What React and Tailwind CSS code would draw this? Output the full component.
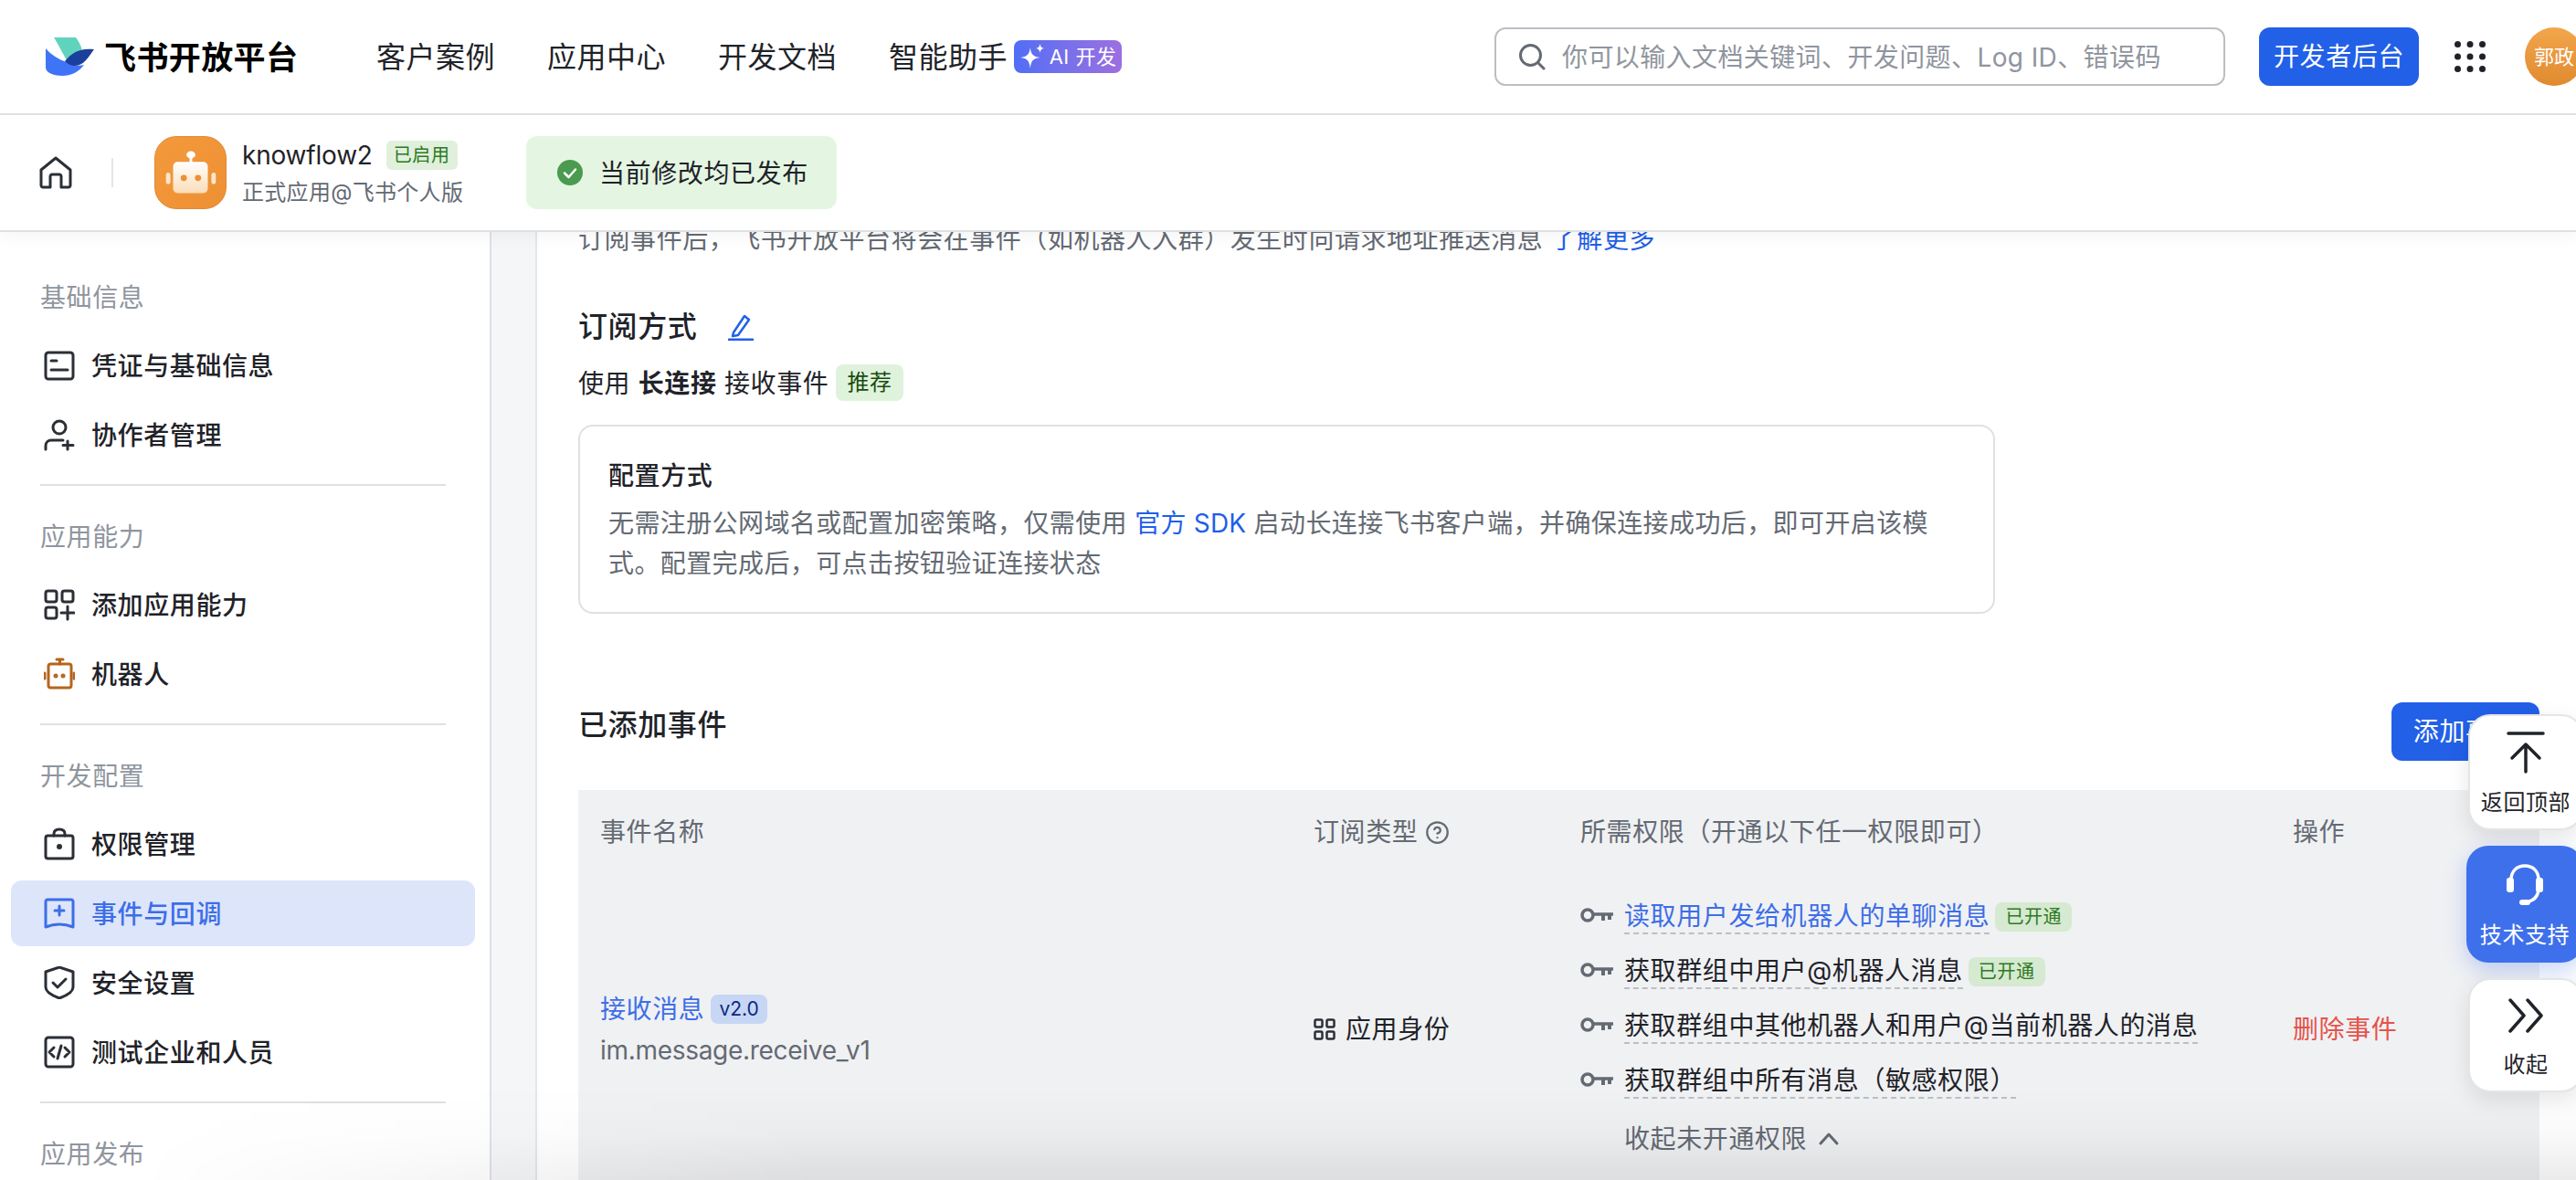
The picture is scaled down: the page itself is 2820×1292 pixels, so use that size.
import React from 'react';
import { CircleHelp } from 'lucide-react';

const Logo = () => (
  <svg width="54" height="42" viewBox="10 11 54 42" className="shrink-0">
    <path d="M19 11H43C46 15 49 20 50 26C44 27 38 31 33 36C28 27 24 19 19 11Z" fill="#5fd3bc" />
    <path d="M10 23C16 30 24 35 33 38C38 41 46 43 52 41C46 49 38 53 28 53C20 53 10 50 10 44Z" fill="#3f74f6" />
    <path d="M31 37C37 30 45 22 63 24C57 32 52 42 42 42C38 42 34 40 31 37Z" fill="#1b3f9c" />
  </svg>
);

const Spark = () => (
  <svg width="30" height="30" viewBox="0 0 28 28" className="shrink-0">
    <path d="M11 5C12 12 14 14 21 15C14 16 12 18 11 26C10 18 8 16 1 15C8 14 10 12 11 5Z" fill="#fff" />
    <path d="M21 1C21.5 4 22.5 5 25 5.5C22.5 6 21.5 7 21 10C20.5 7 19.5 6 17 5.5C19.5 5 20.5 4 21 1Z" fill="#fff" />
  </svg>
);

const BotIcon = () => (
  <div className="w-[79px] h-[80px] shrink-0 rounded-[24px] bg-gradient-to-br from-[#f39a3c] to-[#ee8f33] border border-[#e08a38]">
    <svg width="77" height="78" viewBox="0 0 79 80">
      <defs>
        <linearGradient id="botHead" x1="0" y1="0" x2="0" y2="1">
          <stop offset="0" stopColor="#fff" />
          <stop offset="1" stopColor="#fbdcb8" />
        </linearGradient>
      </defs>
      <ellipse cx="40" cy="20" rx="5" ry="4" fill="#fff" />
      <rect x="38.5" y="22" width="3" height="8" fill="#fff" />
      <rect x="20" y="28" width="39" height="35" rx="5" fill="url(#botHead)" />
      <rect x="12" y="40" width="5" height="13" rx="2.5" fill="#fde6cc" />
      <rect x="63" y="40" width="5" height="13" rx="2.5" fill="#fde6cc" />
      <circle cx="32" cy="46" r="3.5" fill="#ee8f33" />
      <circle cx="48" cy="46" r="3.5" fill="#ee8f33" />
    </svg>
  </div>
);

const SideIcon = ({ children, color = '#2b2f36' }) => (
  <svg width="34" height="36" viewBox="0 0 34 36" fill="none" stroke={color} strokeWidth="3" strokeLinecap="round" strokeLinejoin="round" className="shrink-0">
    {children}
  </svg>
);

const icons = {
  cred: (
    <SideIcon>
      <rect x="2" y="4" width="30" height="29" rx="3" />
      <path d="M8 13H14M8 23H26" />
    </SideIcon>
  ),
  user: (
    <SideIcon>
      <circle cx="17" cy="10" r="7" />
      <path d="M2 34V30C2 26 5 24 8 24H21M26 25V34M21 29.5H32" />
    </SideIcon>
  ),
  add: (
    <SideIcon>
      <rect x="2" y="3" width="12" height="12" rx="2.5" />
      <rect x="20" y="3" width="12" height="12" rx="2.5" />
      <rect x="2" y="21" width="12" height="12" rx="2.5" />
      <path d="M26 20V34M19 27H33" />
    </SideIcon>
  ),
  bot: (
    <SideIcon color="#b5651d">
      <rect x="5" y="7" width="25" height="26" rx="2.5" />
      <path d="M14 2H21M17.500 2V7M1 17V23M33 17V23" />
      <circle cx="13" cy="20" r="1" fill="#b5651d" />
      <circle cx="21" cy="20" r="1" fill="#b5651d" />
    </SideIcon>
  ),
  perm: (
    <SideIcon>
      <rect x="2" y="9" width="30" height="25" rx="2.500" />
      <path d="M11 9V7C11 3 14 2 17 2C20 2 23 3 23 7V9" />
      <circle cx="17" cy="21" r="1.500" fill="#2b2f36" />
    </SideIcon>
  ),
  event: (
    <SideIcon color="#3d6ee8">
      <path d="M2 5C2 4 3 3 4 3H30C31 3 32 4 32 5V33C27 31 22 30 17 30C12 30 7 31 2 33Z" />
      <path d="M17 10V20M12 15H22" />
    </SideIcon>
  ),
  shield: (
    <SideIcon>
      <path d="M17 1L32 6V23C32 28 25 32 17 35C9 32 2 28 2 23V6Z" />
      <path d="M10 18L15 23L24 14" />
    </SideIcon>
  ),
  code: (
    <SideIcon>
      <rect x="2" y="2" width="30" height="32" rx="3" />
      <path d="M11 13L6 18L11 23M23 13L28 18L23 23M19 11L15 25" />
    </SideIcon>
  ),
};

const menu = [
  { title: '基础信息', items: [['cred', '凭证与基础信息'], ['user', '协作者管理']] },
  { title: '应用能力', items: [['add', '添加应用能力'], ['bot', '机器人']] },
  { title: '开发配置', items: [['perm', '权限管理'], ['event', '事件与回调'], ['shield', '安全设置'], ['code', '测试企业和人员']] },
];

const perms = [
  { text: '读取用户发给机器人的单聊消息', on: true, link: true },
  { text: '获取群组中用户@机器人消息', on: true },
  { text: '获取群组中其他机器人和用户@当前机器人的消息' },
  { text: '获取群组中所有消息（敏感权限）' },
];

const Key = () => (
  <svg width="36" height="20" viewBox="0 0 36 20" fill="none" stroke="#646a73" strokeWidth="3.500" className="shrink-0 -mt-[5px]">
    <circle cx="8" cy="10" r="6" />
    <path d="M14 9H36" />
    <path d="M25 9V16M32 9V15" strokeWidth="4" />
  </svg>
);

const Sidebar = () => (
  <aside className="w-[538px] shrink-0 bg-white border-r-2 border-[#dee0e3] pt-12">
    {menu.map((group) => (
      <div key={group.title}>
        <div className="h-[44px] mb-[18px] pl-[44px] pt-[2px] text-[28px] leading-[44px] text-[#8f959e]">{group.title}</div>
        <div className="flex flex-col gap-1">
          {group.items.map(([icon, label]) => {
            const active = icon === 'event';
            return (
              <div
                key={label}
                className={
                  active
                    ? 'ml-3 w-[508px] h-[72px] pl-9 flex items-center gap-[18px] rounded-[12px] bg-[#dde5fa] text-[28px] font-medium text-[#3d6ee8]'
                    : 'ml-3 w-[508px] h-[72px] pl-9 flex items-center gap-[18px] rounded-[12px] text-[28px] font-medium text-[#1f2329]'
                }
              >
                {icons[icon]}
                <span className="pt-[2px]">{label}</span>
              </div>
            );
          })}
        </div>
        <div className="h-[2px] mt-[18px] mb-8 ml-[44px] w-[444px] bg-[#dee0e3]" />
      </div>
    ))}
    <div className="h-[44px] pl-[44px] pt-[2px] text-[28px] leading-[44px] text-[#8f959e]">应用发布</div>
  </aside>
);

const EventTable = () => (
  <div className="mt-8 bg-[#f0f1f3] text-[28px]">
    <div className="h-[92px] flex items-center text-[#646a73]">
      <div className="w-[805px] pl-6">事件名称</div>
      <div className="w-[292px] flex items-center gap-[8px]">
        订阅类型
        <CircleHelp size={27} strokeWidth={2} />
      </div>
      <div className="w-[780px]">所需权限（开通以下任一权限即可）</div>
      <div>操作</div>
    </div>
    <div className="h-[340px] flex items-center">
      <div className="w-[805px] pl-6">
        <div className="flex items-center gap-[7px] h-[44px] pt-[2px]">
          <span className="text-[#3d6ee8]">接收消息</span>
          <span className="h-[32px] px-[9px] rounded-[8px] bg-[#c7d6f5] text-[#0a2a80] text-[21px] leading-[32px] tracking-normal">v2.0</span>
        </div>
        <div className="mt-[2px] leading-[44px] text-[#646a73] tracking-[-0.3px]">im.message.receive_v1</div>
      </div>
      <div className="w-[292px] flex items-center gap-[11px] text-[#1f2329]">
        <svg width="24" height="24" viewBox="0 0 24 24" fill="none" stroke="#2b2f36" strokeWidth="2.500" className="shrink-0">
          <rect x="1.500" y="1.500" width="8" height="8" rx="1.500" />
          <rect x="14.500" y="1.500" width="8" height="8" rx="1.500" />
          <rect x="1.500" y="14.500" width="8" height="8" rx="1.500" />
          <rect x="14.500" y="14.500" width="8" height="8" rx="1.500" />
        </svg>
        应用身份
      </div>
      <div className="w-[780px] h-[306px] flex flex-col">
        {perms.map((p) => (
          <div key={p.text} className="h-[60px] flex items-center">
            <Key />
            <span
              className={
                p.link
                  ? 'ml-[12px] h-[38px] leading-[36px] border-b-2 border-dashed border-[#bbbfc4] text-[#3d6ee8]'
                  : 'ml-[12px] h-[38px] leading-[36px] border-b-2 border-dashed border-[#bbbfc4] text-[#1f2329]'
              }
            >
              {p.text}
            </span>
            {p.on && (
              <span className="ml-[6px] -mt-[1px] h-[32px] px-[11px] rounded-[8px] bg-[#d6e9d1] text-[#2c7a1f] text-[20px] leading-[32px]">已开通</span>
            )}
          </div>
        ))}
        <div className="mt-[3px] h-[60px] pl-[48px] flex items-center gap-[12px] text-[#646a73]">
          收起未开通权限
          <svg width="24" height="16" viewBox="0 0 24 16" fill="none" stroke="#646a73" strokeWidth="3" strokeLinecap="round" strokeLinejoin="round">
            <path d="M3 13L12 3L21 13" />
          </svg>
        </div>
      </div>
      <div className="text-[#e5534b]">删除事件</div>
    </div>
  </div>
);

const App = () => {
  return (
    <div className="relative w-[2820px] h-[1292px] overflow-hidden bg-white flex flex-col tracking-[0.6px] font-['Inter','Noto_Sans_CJK_SC',sans-serif]">
      <header className="relative z-20 h-[126px] shrink-0 bg-white border-b-2 border-[#dee0e3] pl-[50px] flex items-center">
        <Logo />
        <span className="ml-[10px] w-[298px] pt-[2px] text-[35px] font-bold text-black whitespace-nowrap tracking-[0.4px]">飞书开放平台</span>
        <nav className="flex items-center gap-[57px] pt-[2px] text-[32px] text-[#1f2329] whitespace-nowrap tracking-[0.5px]">
          <span>客户案例</span>
          <span>应用中心</span>
          <span>开发文档</span>
          <span className="flex items-center gap-[7px]">
            智能助手
            <span className="h-[36px] w-[118px] -mt-[2px] rounded-[8px] bg-gradient-to-r from-[#4f6ef5] to-[#9b6fe0] flex items-center justify-center gap-[3px] text-white text-[22px] leading-none">
              <Spark />
              AI 开发
            </span>
          </span>
        </nav>
        <div className="ml-auto -mr-[8px] flex items-center shrink-0">
          <div className="w-[800px] h-[64px] rounded-[12px] border-2 border-[#bbbfc4] flex items-center pl-[24px] gap-[18px]">
            <svg width="30" height="30" viewBox="0 0 30 30" fill="none" stroke="#646a73" strokeWidth="3" strokeLinecap="round" className="shrink-0">
              <circle cx="13.500" cy="13.500" r="11" />
              <path d="M22 22L28 28" />
            </svg>
            <span className="pt-[2px] text-[28px] text-[#8f959e] whitespace-nowrap tracking-[0.4px]">你可以输入文档关键词、开发问题、Log ID、错误码</span>
          </div>
          <button className="ml-[37px] w-[175px] h-[64px] rounded-[12px] bg-[#2260e8] text-white text-[28px]">开发者后台</button>
          <svg width="34" height="34" viewBox="0 0 34 34" fill="#1f2329" className="ml-[39px] shrink-0">
            <circle cx="3.500" cy="3.500" r="3.500" />
            <circle cx="17" cy="3.500" r="3.500" />
            <circle cx="30.500" cy="3.500" r="3.500" />
            <circle cx="3.500" cy="17" r="3.500" />
            <circle cx="17" cy="17" r="3.500" />
            <circle cx="30.500" cy="17" r="3.500" />
            <circle cx="3.500" cy="30.500" r="3.500" />
            <circle cx="17" cy="30.500" r="3.500" />
            <circle cx="30.500" cy="30.500" r="3.500" />
          </svg>
          <div className="ml-[43px] w-[64px] h-[64px] rounded-full bg-gradient-to-b from-[#f2a64c] to-[#e08a2f] flex items-center justify-center text-white text-[22px] whitespace-nowrap tracking-normal">郭政</div>
        </div>
      </header>

      <div className="relative z-10 h-[128px] shrink-0 bg-white border-b-2 border-[#dee0e3] shadow-[0_6px_16px_rgba(0,0,0,0.04)] pl-[43px] flex items-center">
        <svg width="36" height="36" viewBox="0 0 36 36" fill="none" stroke="#2b2f36" strokeWidth="3" strokeLinejoin="round" className="shrink-0">
          <path d="M2 15L18 2L34 15V32C34 33 33 34 32 34H24V22C24 21 23 20 22 20H14C13 20 12 21 12 22V34H4C3 34 2 33 2 32Z" />
        </svg>
        <div className="ml-[43px] w-[2px] h-[32px] bg-[#e4e5e7]" />
        <div className="ml-[45px]">
          <BotIcon />
        </div>
        <div className="ml-[17px] w-[311px]">
          <div className="flex items-center gap-[15px] h-[40px] pt-[2px]">
            <span className="text-[28px] text-[#1f2329] tracking-[-0.2px]">knowflow2</span>
            <span className="h-[32px] px-[8px] rounded-[6px] bg-[#e0f0dc] text-[#2c7a1f] text-[20px] leading-[32px]">已启用</span>
          </div>
          <div className="mt-[4px] h-[36px] text-[24px] leading-[36px] text-[#646a73] tracking-[0.3px]">正式应用@飞书个人版</div>
        </div>
        <div className="w-[340px] h-[80px] rounded-[12px] bg-[#e4f6e2] flex items-center pl-[34px] gap-[18px] text-[28px] text-[#1f2329]">
          <svg width="28" height="28" viewBox="0 0 28 28" className="shrink-0">
            <circle cx="14" cy="14" r="14" fill="#4a9b4f" />
            <path d="M8 14.500L12.500 19L20 10.500" fill="none" stroke="#fff" strokeWidth="2.500" strokeLinecap="round" strokeLinejoin="round" />
          </svg>
          <span className="pt-[2px]">当前修改均已发布</span>
        </div>
      </div>

      <div className="flex flex-1 min-h-0 overflow-hidden">
        <Sidebar />
        <div className="w-[50px] shrink-0 bg-[#f5f6f8] border-r-2 border-[#e4e5e7]" />
        <main className="flex-1 min-w-0 pl-[45px] pr-10 -mt-[14px] text-[#1f2329]">
          <p className="text-[28px] leading-[44px] text-[#646a73] whitespace-nowrap tracking-[0.55px]">
            订阅事件后，飞书开放平台将会在事件（如机器人入群）发生时向请求地址推送消息 <a className="text-[#1f5fe8]">了解更多</a>
          </p>
          <div className="mt-[52px] h-[44px] flex items-center gap-[34px]">
            <h2 className="text-[32px] font-medium">订阅方式</h2>
            <svg width="28" height="30" viewBox="0 0 28 30" fill="none" stroke="#2260e8" strokeWidth="2.500" strokeLinejoin="round" strokeLinecap="round">
              <path d="M6 21L18 3L23 7L11 24L5 25Z" />
              <path d="M1 29H27" strokeWidth="3" />
            </svg>
          </div>
          <div className="mt-[19px] h-[40px] flex items-center text-[28px]">
            <span className="pt-[2px]">
              使用&nbsp;<b className="font-semibold">长连接</b>&nbsp;接收事件
            </span>
            <span className="ml-[8px] h-[40px] px-[12px] rounded-[8px] bg-[#dff3dc] text-[#1b4a10] text-[24px] leading-[40px]">推荐</span>
          </div>
          <div className="mt-[26px] w-[1551px] h-[207px] rounded-[16px] border-2 border-[#dee0e3] pl-[31px] pr-[30px] pt-[34px]">
            <div className="text-[28px] leading-[40px] font-medium">配置方式</div>
            <p className="mt-[10px] text-[28px] leading-[44px] text-[#646a73] tracking-[0.4px]">
              无需注册公网域名或配置加密策略，仅需使用 <a className="text-[#1f5fe8] tracking-[0.2px]">官方 SDK</a> 启动长连接飞书客户端，并确保连接成功后，即可开启该模式。配置完成后，可点击按钮验证连接状态
            </p>
          </div>
          <div className="mt-[97px] flex items-start justify-between">
            <h2 className="mt-[3px] text-[32px] leading-[44px] font-medium">已添加事件</h2>
            <button className="w-[162px] h-[64px] rounded-[12px] bg-[#2260e8] text-white text-[28px]">添加事件</button>
          </div>
          <EventTable />
        </main>
      </div>

      {/* dock shadow along the bottom edge of the capture */}
      <div className="absolute z-30 inset-x-0 bottom-0 h-[100px] pointer-events-none bg-gradient-to-t from-black/[0.08] via-black/[0.02] to-transparent [mask-image:linear-gradient(to_right,transparent_150px,black_900px)]" />

      <div className="absolute z-40 left-[2700px] top-[782px] flex flex-col gap-[17px] text-[24px]">
        <div className="ml-[2px] w-[126px] h-[127px] rounded-[24px] bg-white border-2 border-[#e4e5e7] shadow-[0_8px_24px_rgba(0,0,0,0.1)] flex flex-col items-center pt-[17px] text-[#1f2329]">
          <svg width="42" height="46" viewBox="0 0 42 46" fill="none" stroke="#1f2329" strokeWidth="3.500" strokeLinecap="round" strokeLinejoin="round">
            <path d="M2 2H40M21 14V44M6 29L21 14L36 29" />
          </svg>
          <span className="mt-[15px] leading-[34px]">返回顶部</span>
        </div>
        <div className="w-[128px] h-[128px] rounded-[24px] bg-[#3f70eb] shadow-[0_8px_24px_rgba(63,112,235,0.3)] flex flex-col items-center pt-[20px] text-white">
          <svg width="42" height="46" viewBox="0 0 42 46" fill="none" stroke="#fff" strokeWidth="3.500" strokeLinecap="round">
            <path d="M6 20V17C6 8 12 2 21 2C30 2 36 8 36 17V26C36 34 32 41 20 42" />
            <rect x="1" y="15" width="8" height="16" rx="3" fill="#fff" stroke="none" />
            <rect x="33" y="15" width="8" height="16" rx="3" fill="#fff" stroke="none" />
            <rect x="15" y="39" width="12" height="6" rx="3" fill="#fff" stroke="none" />
          </svg>
          <span className="mt-[15px] leading-[34px]">技术支持</span>
        </div>
        <div className="ml-[2px] w-[126px] h-[125px] rounded-[24px] bg-white border-2 border-[#e4e5e7] shadow-[0_8px_24px_rgba(0,0,0,0.1)] flex flex-col items-center pt-[20px] text-[#1f2329]">
          <svg width="40" height="38" viewBox="0 0 40 38" fill="none" stroke="#1f2329" strokeWidth="3.500" strokeLinecap="round" strokeLinejoin="round">
            <path d="M3 2L18 19L3 36M22 2L37 19L22 36" />
          </svg>
          <span className="mt-[18px] leading-[34px]">收起</span>
        </div>
      </div>
    </div>
  );
};

export default App;
